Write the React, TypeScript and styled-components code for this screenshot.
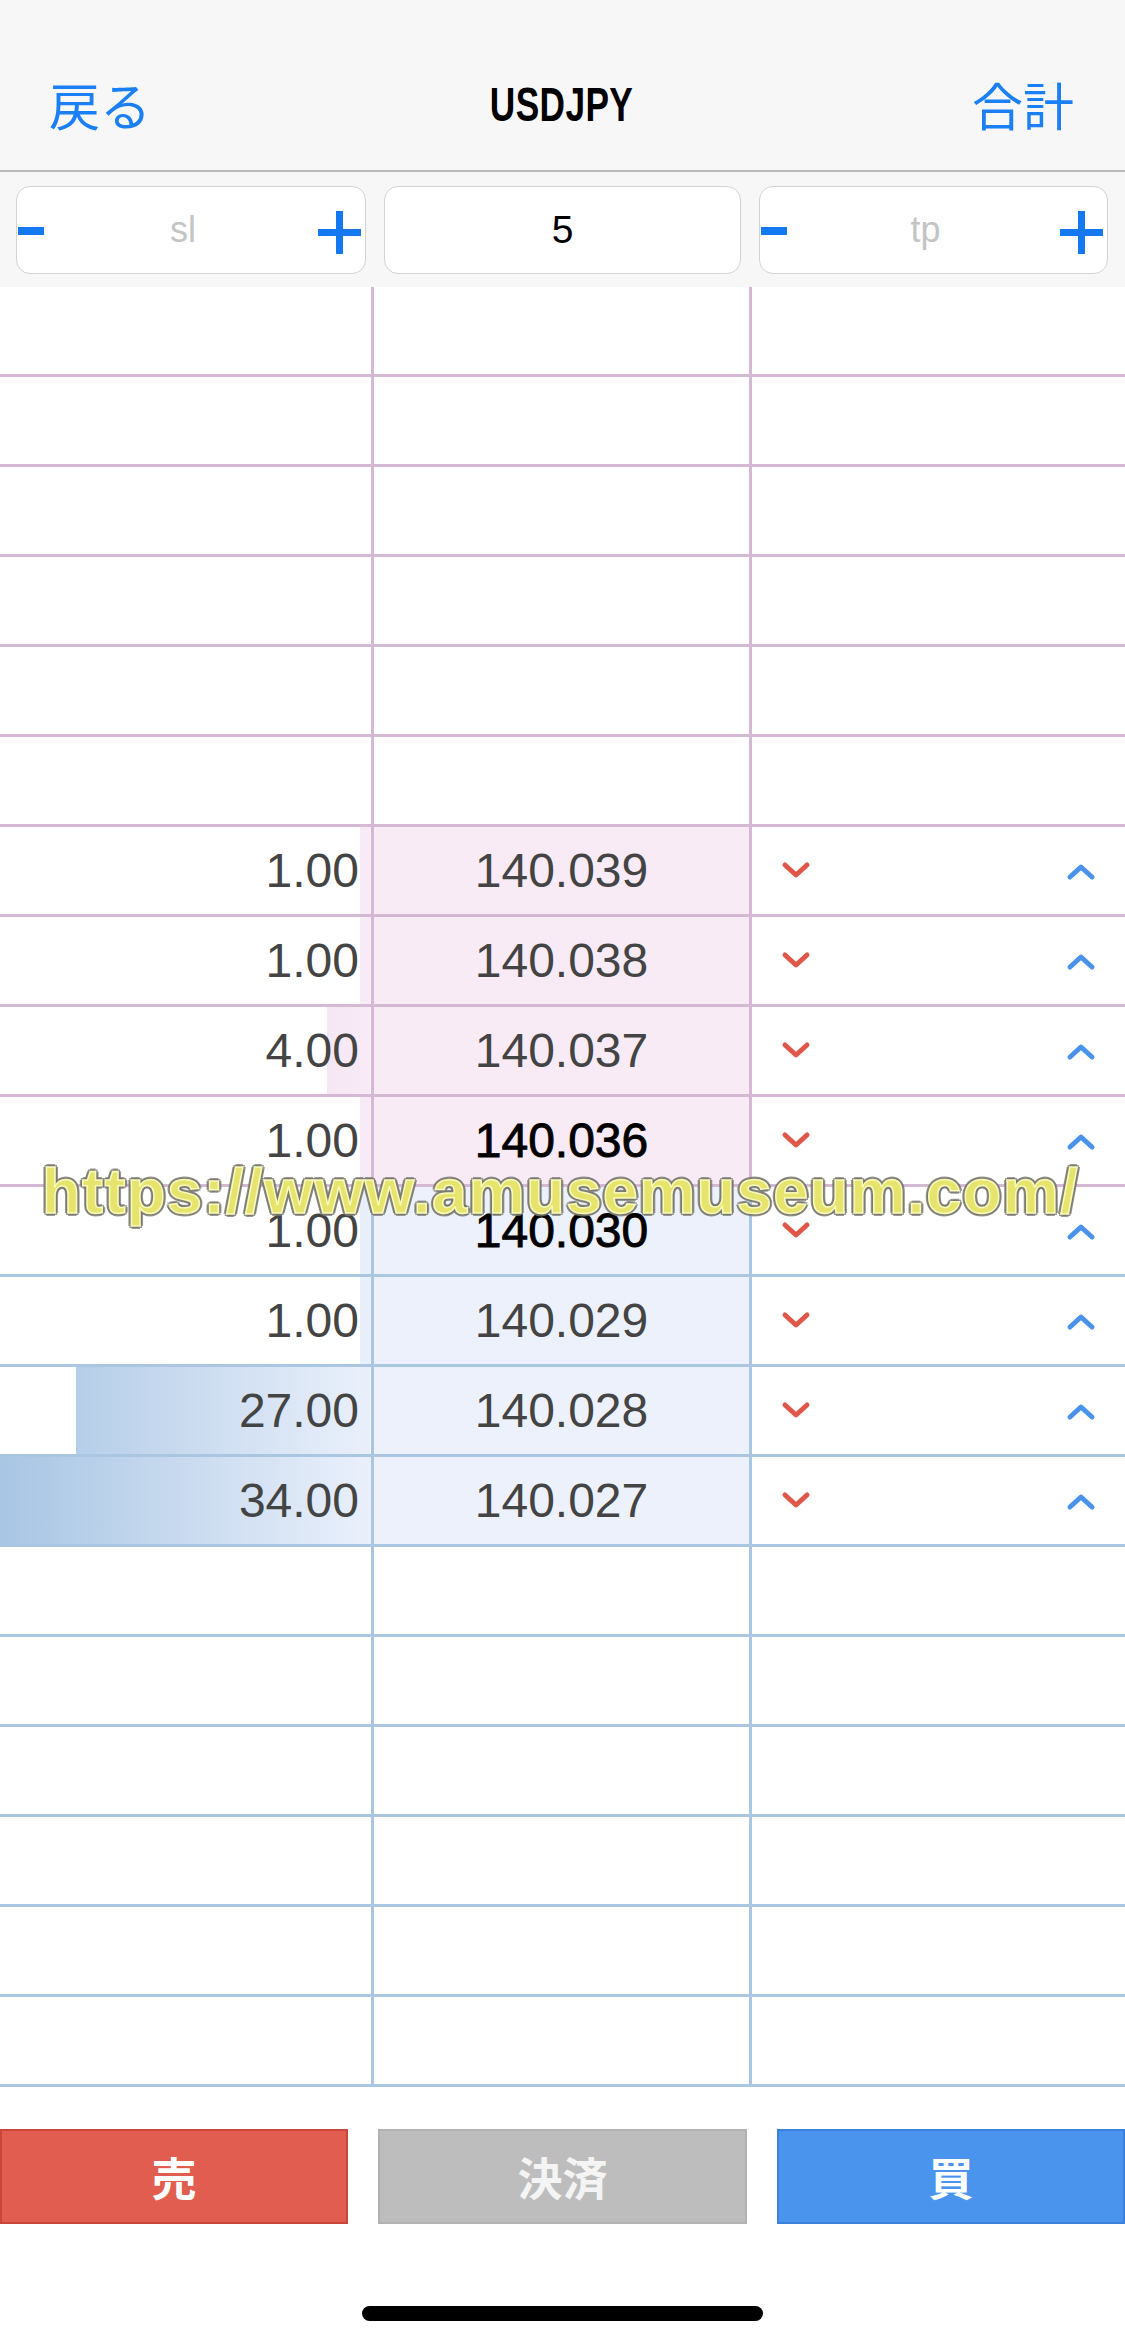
import styled, { createGlobalStyle } from 'styled-components';

const GlobalStyle = createGlobalStyle`
  html, body {
    margin: 0;
    padding: 0;
    background: #ffffff;
  }
  body {
    font-family: 'Liberation Sans', Arial, 'Noto Sans CJK JP', sans-serif;
  }
  * {
    box-sizing: border-box;
  }
`;

const Page = styled.div`
  position: relative;
  width: 1125px;
  min-height: 2345px;
  display: flex;
  flex-direction: column;
  background: #ffffff;
  overflow: hidden;
`;

const NavBar = styled.div`
  height: 172px;
  padding: 38px 51px 0 49px;
  background: #f7f7f7;
  border-bottom: 2px solid #b9b9b9;
  display: grid;
  grid-template-columns: 1fr auto 1fr;
  align-items: center;
`;

const NavLink = styled.div<{ $right?: boolean }>`
  font-family: 'Noto Sans CJK JP', sans-serif;
  font-size: 51px;
  color: #1b7ff5;
  text-align: ${(p) => (p.$right ? 'right' : 'left')};
  line-height: 1;
`;

const Title = styled.div`
  font-family: 'Liberation Sans', Arial, sans-serif;
  font-weight: bold;
  font-size: 49px;
  color: #000;
  transform: scaleX(0.72);
  letter-spacing: 0.5px;
`;

const InputRow = styled.div`
  height: 115px;
  background: #f7f7f7;
  padding: 14px 0 0 16px;
  display: grid;
  grid-template-columns: 350px 357px 349px;
  column-gap: 18px;
  align-items: start;
`;

const Field = styled.div`
  position: relative;
  height: 88px;
  background: #ffffff;
  border: 1.5px solid #d3d3d3;
  border-radius: 14px;
  display: flex;
  align-items: center;
  justify-content: center;
`;

const FieldText = styled.span<{ $placeholder?: boolean }>`
  font-family: 'Liberation Sans', Arial, sans-serif;
  font-size: ${(p) => (p.$placeholder ? '36px' : '39px')};
  color: ${(p) => (p.$placeholder ? '#c4c4c4' : '#000')};
  margin-right: ${(p) => (p.$placeholder ? '16px' : '0')};
`;

const Minus = styled.span`
  position: absolute;
  left: 1px;
  top: 40px;
  width: 26px;
  height: 8px;
  background: #1479f0;
`;

const PlusIcon = styled.svg`
  position: absolute;
  right: 4px;
  top: 24px;
  width: 43px;
  height: 43px;
`;

const Plus = () => (
  <PlusIcon viewBox="0 0 43 43">
    <rect x="0" y="18" width="43" height="7" fill="#1479f0" />
    <rect x="18" y="0" width="7" height="43" fill="#1479f0" />
  </PlusIcon>
);

const Board = styled.div`
  display: flex;
  flex-direction: column;
`;

type Side = 'ask' | 'bid';

const lineColor = (s: Side) => (s === 'ask' ? '#d5b8d4' : '#abc6e1');

const Row = styled.div<{ $side: Side }>`
  height: 90px;
  display: grid;
  grid-template-columns: 374px 378px 1fr;
  border-bottom: 3px solid ${(p) => lineColor(p.$side)};
`;

const VolumeCell = styled.div<{ $side: Side }>`
  position: relative;
  border-right: 3px solid ${(p) => lineColor(p.$side)};
  display: flex;
  align-items: center;
  justify-content: flex-end;
  padding-right: 12px;
`;

const VolumeBar = styled.div<{ $side: Side }>`
  position: absolute;
  top: 0;
  bottom: 0;
  right: 0;
  background: ${(p) =>
    p.$side === 'ask'
      ? 'linear-gradient(to right, #e6c6e0, #f8ebf6)'
      : 'linear-gradient(to right, #a8c5e3, #eaf0fb)'};
  background-size: 371px 100%;
  background-position: right top;
`;

const Volume = styled.span`
  position: relative;
  font-size: 48px;
  color: #444;
`;

const PriceCell = styled.div<{ $side: Side; $filled: boolean }>`
  border-right: 3px solid ${(p) => lineColor(p.$side)};
  background: ${(p) => (!p.$filled ? '#fff' : p.$side === 'ask' ? '#f8ebf6' : '#ecf1fc')};
  display: flex;
  align-items: center;
  justify-content: center;
`;

const Price = styled.span<{ $best?: boolean }>`
  font-size: 48px;
  color: ${(p) => (p.$best ? '#000' : '#444')};
  -webkit-text-stroke: ${(p) => (p.$best ? '0.9px #000' : '0')};
`;

const ActionCell = styled.div`
  display: flex;
  align-items: center;
  justify-content: space-between;
  padding: 0 29px 0 29px;
`;

const Chevron = styled.svg`
  width: 30px;
  height: 20px;
`;

const Down = () => (
  <Chevron viewBox="0 0 30 20">
    <polyline points="4,4 15,14 26,4" fill="none" stroke="#e0574a" strokeWidth="5" strokeLinecap="round" strokeLinejoin="round" />
  </Chevron>
);

const Up = () => (
  <Chevron viewBox="0 0 30 20">
    <polyline points="4,16 15,6 26,16" fill="none" stroke="#4a92ea" strokeWidth="5" strokeLinecap="round" strokeLinejoin="round" />
  </Chevron>
);

const Buttons = styled.div`
  margin-top: 42px;
  display: grid;
  grid-template-columns: 348px 369px 1fr;
  column-gap: 30px;
`;

const tradeColors = {
  sell: { bg: '#e05d50', border: '#c8463a', text: '#ffffff' },
  close: { bg: '#bdbdbd', border: '#b2b2b2', text: '#f4f4f4' },
  buy: { bg: '#4b94ee', border: '#3b80dc', text: '#ffffff' },
};

const TradeButton = styled.div<{ $kind: keyof typeof tradeColors }>`
  height: 95px;
  background: ${(p) => tradeColors[p.$kind].bg};
  border: 2px solid ${(p) => tradeColors[p.$kind].border};
  color: ${(p) => tradeColors[p.$kind].text};
  font-family: 'Noto Sans CJK JP', sans-serif;
  font-weight: bold;
  font-size: 45px;
  display: flex;
  align-items: center;
  justify-content: center;
`;

const HomeBar = styled.div`
  width: 401px;
  height: 15px;
  margin: 82px auto 0;
  border-radius: 8px;
  background: #000;
`;

// watermark stamped over the screenshot
const Watermark = styled.div`
  position: absolute;
  left: 42px;
  top: 1155px;
  font-family: 'Liberation Sans', Arial, sans-serif;
  font-weight: bold;
  font-size: 63px;
  letter-spacing: 1.5px;
  color: rgba(240, 238, 110, 0.92);
  -webkit-text-stroke: 1.5px rgba(255, 255, 200, 0.9);
  text-shadow:
    3px 0 0 rgba(120, 120, 110, 0.75),
    -3px 0 0 rgba(120, 120, 110, 0.75),
    0 3px 0 rgba(120, 120, 110, 0.75),
    0 -3px 0 rgba(120, 120, 110, 0.75),
    2px 2px 0 rgba(120, 120, 110, 0.75),
    -2px -2px 0 rgba(120, 120, 110, 0.75),
    2px -2px 0 rgba(120, 120, 110, 0.75),
    -2px 2px 0 rgba(120, 120, 110, 0.75);
  white-space: nowrap;
  pointer-events: none;
`;

type Level = { vol: number; price: string; best?: boolean };

const asks: Level[] = [
  { vol: 1, price: '140.039' },
  { vol: 1, price: '140.038' },
  { vol: 4, price: '140.037' },
  { vol: 1, price: '140.036', best: true },
];

const bids: Level[] = [
  { vol: 1, price: '140.030', best: true },
  { vol: 1, price: '140.029' },
  { vol: 27, price: '140.028' },
  { vol: 34, price: '140.027' },
];

const maxVol = 34;

const EmptyRow = ({ side }: { side: Side }) => (
  <Row $side={side}>
    <VolumeCell $side={side} />
    <PriceCell $side={side} $filled={false} />
    <ActionCell />
  </Row>
);

const LevelRow = ({ side, level }: { side: Side; level: Level }) => (
  <Row $side={side}>
    <VolumeCell $side={side}>
      <VolumeBar $side={side} style={{ width: `${(level.vol / maxVol) * 371}px` }} />
      <Volume>{level.vol.toFixed(2)}</Volume>
    </VolumeCell>
    <PriceCell $side={side} $filled>
      <Price $best={level.best}>{level.price}</Price>
    </PriceCell>
    <ActionCell>
      <Down />
      <Up />
    </ActionCell>
  </Row>
);

export default function App() {
  return (
    <>
      <GlobalStyle />
      <Page>
        <NavBar>
          <NavLink>戻る</NavLink>
          <Title>USDJPY</Title>
          <NavLink $right>合計</NavLink>
        </NavBar>

        <InputRow>
          <Field>
            <Minus />
            <FieldText $placeholder>sl</FieldText>
            <Plus />
          </Field>
          <Field>
            <FieldText>5</FieldText>
          </Field>
          <Field>
            <Minus />
            <FieldText $placeholder>tp</FieldText>
            <Plus />
          </Field>
        </InputRow>

        <Board>
          {Array.from({ length: 6 }).map((_, i) => (
            <EmptyRow key={`ea${i}`} side="ask" />
          ))}
          {asks.map((l) => (
            <LevelRow key={l.price} side="ask" level={l} />
          ))}
          {bids.map((l) => (
            <LevelRow key={l.price} side="bid" level={l} />
          ))}
          {Array.from({ length: 6 }).map((_, i) => (
            <EmptyRow key={`eb${i}`} side="bid" />
          ))}
        </Board>

        <Buttons>
          <TradeButton $kind="sell">売</TradeButton>
          <TradeButton $kind="close">決済</TradeButton>
          <TradeButton $kind="buy">買</TradeButton>
        </Buttons>

        <HomeBar />

        <Watermark>https://www.amusemuseum.com/</Watermark>
      </Page>
    </>
  );
}
